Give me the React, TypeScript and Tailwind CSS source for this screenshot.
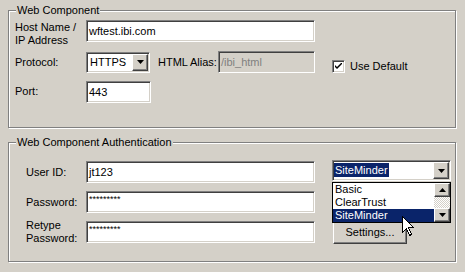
import type { ReactNode } from "react";

const sunken =
  "border border-t-[#808080] border-l-[#808080] border-b-white border-r-white shadow-[inset_1px_1px_0_#404040,inset_-1px_-1px_0_#d4d0c8]";
const raised =
  "border border-t-white border-l-white border-b-[#404040] border-r-[#404040] shadow-[inset_-1px_-1px_0_#808080] bg-[#d4d0c8]";

function Arrow({ up = false }: { up?: boolean }) {
  return (
    <svg width="7" height="4" viewBox="0 0 7 4" className={up ? "rotate-180" : ""}>
      <path d="M0 0h7L3.5 4z" fill="#000" />
    </svg>
  );
}

function ArrowButton({ className = "" }: { className?: string }) {
  return (
    <div className={`${raised} flex items-center justify-center ${className}`}>
      <Arrow />
    </div>
  );
}

function Group({ title, className, children }: { title: string; className: string; children: ReactNode }) {
  return (
    <div
      className={`relative w-[448px] border border-[#808080] shadow-[1px_1px_0_#fff,inset_1px_1px_0_#fff] ${className}`}
    >
      <span className="absolute left-[7px] top-[-7px] bg-[#d4d0c8] px-[1px] leading-[13px]">{title}</span>
      {children}
    </div>
  );
}

function TextBox({ value, className, disabled = false, secret = false }: { value: string; className: string; disabled?: boolean; secret?: boolean }) {
  return (
    <div
      className={`${sunken} flex pl-[2px] ${secret ? "items-start pt-[3px] text-[9px] leading-[9px]" : "items-center"} ${
        disabled ? "bg-[#d4d0c8] text-[#808080]" : "bg-white"
      } ${className}`}
    >
      {value}
    </div>
  );
}

function Cursor() {
  return (
    <svg width="13" height="21" viewBox="0 0 13 21" className="absolute left-[402px] top-[216px] z-20">
      <path
        d="M0.5 0.5V16.5L4.5 12.5L7.5 19.5L9.5 18.5L6.5 11.5H11.5Z"
        fill="#fff"
        stroke="#000"
        strokeWidth="1"
        shapeRendering="crispEdges"
      />
    </svg>
  );
}

export default function App() {
  return (
    <div className="relative h-[272px] w-[465px] overflow-hidden bg-[#d4d0c8] pl-[8px] pt-[10px] font-['Liberation_Sans',Arial,sans-serif] text-[11px] text-black">
      <Group title="Web Component" className="h-[118px] pl-[6px] pt-[9px]">
        <div className="flex h-[22px]">
          <div className="w-[71px] pt-[1px] leading-[13px]">
            Host Name /
            <br />
            IP Address
          </div>
          <TextBox value="wftest.ibi.com" className="h-[22px] w-[229px]" />
        </div>

        <div className="mt-[9px] flex h-[22px] items-center">
          <div className="w-[71px]">Protocol:</div>
          <div className={`${sunken} flex h-[21px] w-[64px] items-center bg-white pl-[3px]`}>
            <span className="flex-1">HTTPS</span>
            <ArrowButton className="mr-[1px] h-[17px] w-[16px]" />
          </div>
          <div className="ml-[8px] w-[60px]">HTML Alias:</div>
          <TextBox value="/ibi_html" disabled className="h-[22px] w-[97px]" />
          <label className="ml-[17px] mt-[7px] flex items-center self-start">
            <span className={`${sunken} flex h-[13px] w-[13px] items-center justify-center bg-white`}>
              <svg width="7" height="7" viewBox="0 0 7 7">
                <path d="M0 2L0 4L2 6L7 1L7 -1L2 4Z" fill="#000" />
              </svg>
            </span>
            <span className="ml-[5px]">Use Default</span>
          </label>
        </div>

        <div className="mt-[8px] flex items-start">
          <div className="w-[71px] pt-[2px]">Port:</div>
          <TextBox value="443" className="h-[22px] w-[65px]" />
        </div>
      </Group>

      <Group title="Web Component Authentication" className="mt-[14px] flex h-[120px] pt-[17px]">
        <div className="mt-[1px] flex flex-col gap-[8px] pl-[17px]">
          <div className="flex h-[22px] items-center">
            <div className="w-[60px]">User ID:</div>
            <TextBox value="jt123" className="h-[22px] w-[229px]" />
          </div>
          <div className="flex h-[22px] items-center">
            <div className="w-[60px]">Password:</div>
            <TextBox value="*********" secret className="h-[22px] w-[229px]" />
          </div>
          <div className="flex h-[22px] items-center">
            <div className="w-[60px] leading-[13px]">
              Retype
              <br />
              Password:
            </div>
            <TextBox value="*********" secret className="h-[22px] w-[229px]" />
          </div>
        </div>

        <div className="relative ml-[17px] flex flex-col">
          <div className={`${sunken} flex h-[21px] w-[119px] items-center bg-white pl-[1px]`}>
            <span className="flex-1">
              <span className="bg-[#0a246a] px-[1px] py-[1px] text-white">SiteMinder</span>
            </span>
            <ArrowButton className="mr-[1px] h-[17px] w-[16px]" />
          </div>

          <div className="absolute left-0 top-[22px] z-10 flex h-[41px] w-[119px] border border-black bg-white">
            <div className="flex flex-1 flex-col leading-[13px]">
              <div className="pl-[2px]">Basic</div>
              <div className="pl-[2px]">ClearTrust</div>
              <div className="bg-[#0a246a] pl-[2px] text-white">SiteMinder</div>
            </div>
            <div className="flex w-[16px] flex-col">
              <div className={`${raised} flex h-[14px] items-center justify-center`}>
                <Arrow up />
              </div>
              <div className="flex-1 bg-[repeating-conic-gradient(#d4d0c8_0%_25%,#ffffff_0%_50%)] bg-[length:2px_2px]" />
              <div className={`${raised} flex h-[14px] items-center justify-center`}>
                <Arrow />
              </div>
            </div>
          </div>

          <button className={`${raised} ml-[1px] mt-[40px] h-[23px] w-[74px] text-center`}>Settings...</button>
        </div>
      </Group>

      <Cursor />
    </div>
  );
}
